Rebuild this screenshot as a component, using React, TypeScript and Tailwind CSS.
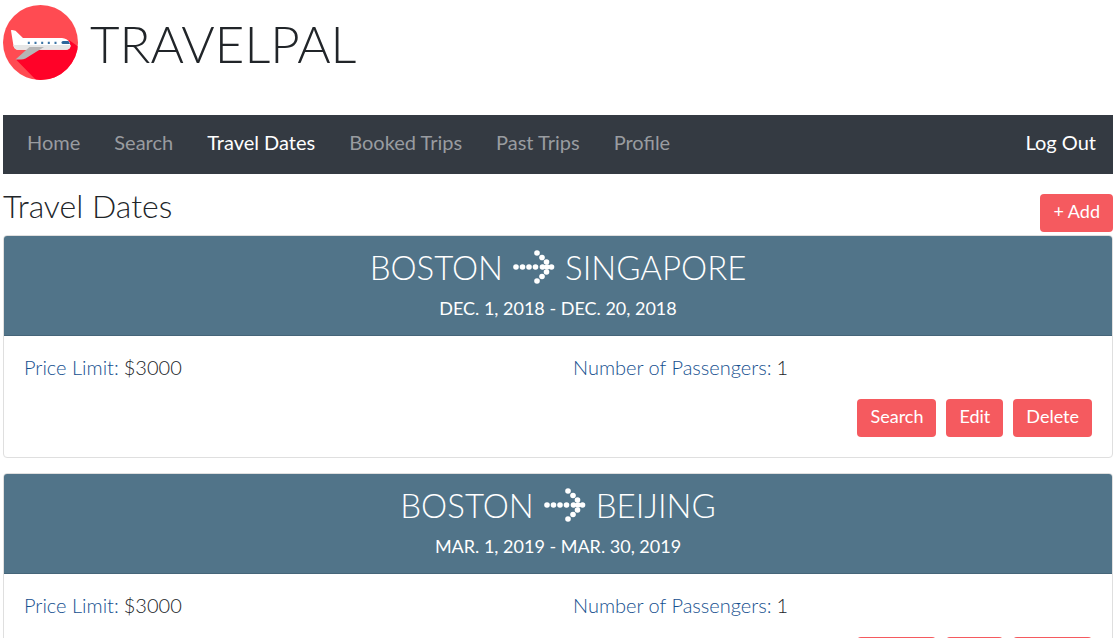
type Trip = {
  from: string;
  to: string;
  dates: string;
  limit: string;
  passengers: number;
};

const trips: Trip[] = [
  { from: "BOSTON", to: "SINGAPORE", dates: "DEC. 1, 2018 - DEC. 20, 2018", limit: "$3000", passengers: 1 },
  { from: "BOSTON", to: "BEIJING", dates: "MAR. 1, 2019 - MAR. 30, 2019", limit: "$3000", passengers: 1 },
];

const links = ["Home", "Search", "Travel Dates", "Booked Trips", "Past Trips", "Profile"];

function Logo() {
  return (
    <svg className="size-[75px] shrink-0" viewBox="0 0 75 75" aria-hidden="true">
      <defs>
        <clipPath id="disc">
          <circle cx="37.5" cy="37.5" r="37.5" />
        </clipPath>
      </defs>
      <circle cx="37.5" cy="37.5" r="37.5" fill="#ff4b52" />
      <path clipPath="url(#disc)" d="M13 54.500 35 77H77V43L66 35 60 44H38Z" fill="#ff0228" />
      <path d="M8 25.500Q8 24.800 9 25L12.500 25.800L20 33H59Q64 33.500 66.500 37L67.500 41Q67 44.500 63 44.800H14Q11 44 10.500 41Z" fill="#fff" />
      <path d="M10.300 40H67.500V41.500Q66.500 44.800 63 44.800H14Q11 44 10.300 40Z" fill="#e6e6e6" />
      <path d="M26.500 42H41L22.500 53.500Q20.500 54.500 18 54.500H12.500Z" fill="#b5b5b5" />
      <path d="M60 36H65.500L67 39H60Q58.500 39 58.500 37.500T60 36Z" fill="#2d669b" />
      <path d="M24.800 37.800h2M31.500 37.800h2M38.200 37.800h2M44.800 37.800h2M51.500 37.800h2" stroke="#3b74a5" strokeWidth="2.200" />
    </svg>
  );
}

const arrowDots = [
  [3, 17], [9.5, 17], [16, 17], [22.5, 17], [29.5, 17], [34, 17], [38.5, 17],
  [24, 3], [29, 7.5], [33.5, 12], [33.5, 22], [29, 26.5], [24, 31],
];

function DottedArrow() {
  return (
    <svg className="h-[34px] w-[42px] shrink-0" viewBox="0 0 42 34" fill="currentColor" role="img" aria-label="to">
      {arrowDots.map(([x, y]) => (
        <circle key={`${x}-${y}`} cx={x} cy={y} r="2.8" />
      ))}
    </svg>
  );
}

function ActionButton({ children }: { children: string }) {
  return (
    <button type="button" className="h-[38px] rounded bg-[#f55a5f] px-[13px] pb-1 text-lg leading-6 text-white">
      {children}
    </button>
  );
}

function TripCard({ trip }: { trip: Trip }) {
  return (
    <article className="overflow-hidden rounded border border-[#dfdfdf] bg-white">
      <header className="flex flex-col items-center border-b border-[#456579] bg-[#517489] pb-[15px] pt-[13px] text-white">
        <h2 className="flex items-center gap-[10px] text-[33px] font-light leading-9">
          <span>{trip.from}</span>
          <DottedArrow />
          <span>{trip.to}</span>
        </h2>
        <p className="mt-[11px] text-lg leading-6">{trip.dates}</p>
      </header>
      <div className="px-5 pb-5 pt-[19px]">
        <dl className="grid grid-cols-2 text-xl font-light leading-6 text-[#212529]">
          <div className="flex gap-[5px]">
            <dt className="text-[#15508f]">Price Limit:</dt>
            <dd>{trip.limit}</dd>
          </div>
          <div className="flex gap-[5px] pl-[15px]">
            <dt className="text-[#15508f]">Number of Passengers:</dt>
            <dd>{trip.passengers}</dd>
          </div>
        </dl>
        <div className="mt-5 flex justify-end gap-[10px]">
          <ActionButton>Search</ActionButton>
          <ActionButton>Edit</ActionButton>
          <ActionButton>Delete</ActionButton>
        </div>
      </div>
    </article>
  );
}

export default function App() {
  return (
    <div className="bg-white pb-4 pl-[3px] pr-1 font-[Lato,sans-serif] text-[#212529]">
      <header className="flex items-center gap-3 pb-[35px] pt-[5px]">
        <Logo />
        <h1 className="pt-[2px] text-[51px] font-light leading-[60px]">TRAVELPAL</h1>
      </header>
      <nav className="flex h-[59px] items-center justify-between bg-[#343a42] pb-[5px] pl-6 pr-[17px] text-xl leading-6">
        <ul className="flex gap-[34px]">
          {links.map((name) => (
            <li key={name}>
              <a href="#" className={name === "Travel Dates" ? "text-white" : "text-[#999ca0]"}>
                {name}
              </a>
            </li>
          ))}
        </ul>
        <a href="#" className="text-white">Log Out</a>
      </nav>
      <main>
        <div className="flex items-start justify-between pb-[3px] pt-5">
          <h2 className="text-[32px] font-light leading-6">Travel Dates</h2>
          <ActionButton>+ Add</ActionButton>
        </div>
        <div className="flex flex-col gap-[15px]">
          {trips.map((trip) => (
            <TripCard key={trip.to} trip={trip} />
          ))}
        </div>
      </main>
    </div>
  );
}
